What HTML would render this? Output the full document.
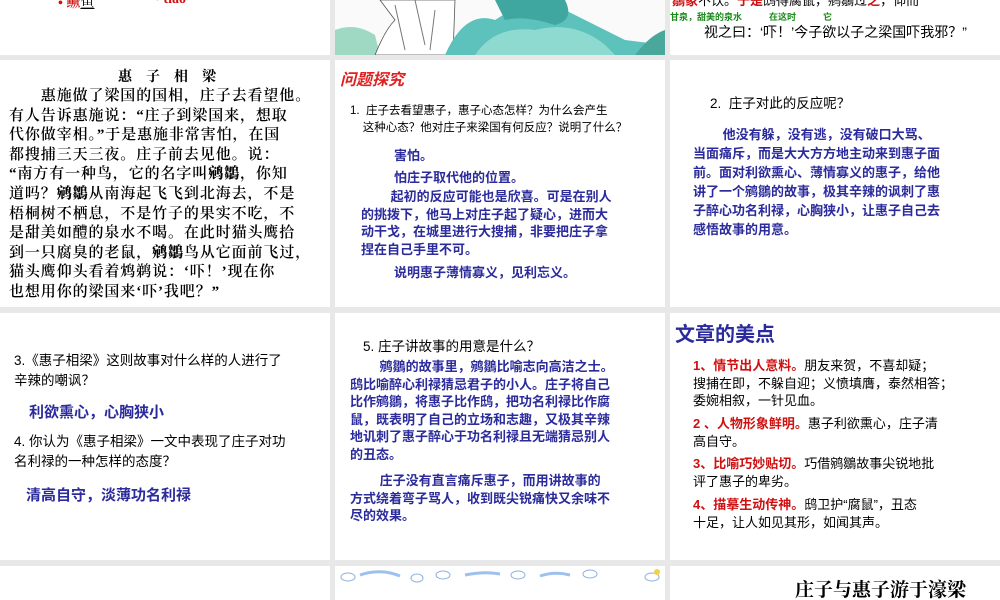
<!DOCTYPE html>
<html><head><meta charset="utf-8">
<style>
*{margin:0;padding:0;box-sizing:border-box}
body{width:1000px;height:600px;background:#e8e8e8;position:relative;overflow:hidden;font-family:"Liberation Sans","Noto Sans CJK SC",sans-serif;}
.s{position:absolute;background:#fff;overflow:hidden}
.t{position:absolute;white-space:nowrap}
.serif{font-family:"Liberation Serif","Noto Serif CJK SC",serif}
.blue{color:#2b2b9c;font-weight:bold}
.red{color:#d01010;font-weight:bold}
</style></head><body>
<!-- row1 -->
<div class="s" style="left:0;top:0;width:330px;height:55px">
 <div class="t red serif" style="left:58px;top:-8px;font-size:14px">•&nbsp;鳜<span style="color:#000;font-weight:normal;text-decoration:underline">鱼</span></div>
 <div class="t red serif" style="left:155px;top:-8px;font-size:14px">•&nbsp;tiao</div>
</div>
<div class="s" style="left:335px;top:0;width:330px;height:55px;background:#fafafa">
 <svg width="330" height="55" style="position:absolute;left:0;top:0">
  <path d="M0 55 L0 30 Q20 22 40 35 L45 55Z" fill="#9fd9c4"/>
  <path d="M45 0 L120 0 L118 55 L40 55 Q50 30 60 20Z" fill="#fff" stroke="#555" stroke-width="0.8"/>
  <path d="M60 5 L70 50 M80 0 L90 45 M100 10 L95 50" stroke="#777" fill="none"/>
  <path d="M110 55 Q130 10 160 20 Q190 0 220 5 Q260 25 290 40 L330 45 L330 55Z" fill="#5cc2bb"/>
  <path d="M140 55 Q160 25 200 30 Q240 20 270 45 L280 55Z" fill="#8fdad0"/>
  <path d="M160 0 L230 0 Q240 20 220 25 Q190 15 170 20Z" fill="#3fa7a0"/>
  <path d="M300 55 Q315 35 330 30 L330 55Z" fill="#4aa79b"/>
 </svg>
</div>
<div class="s" style="left:670px;top:0;width:330px;height:55px">
 <div class="t" style="left:2px;top:-10px;font-size:13px;color:#000"><span class="red">鶵象</span>不饮。<span class="red">于是</span>鸱得腐鼠，鹓鶵过<span class="red">之</span>，仰而</div>
 <div class="t" style="left:0;top:10px;font-size:9px;color:#1a8a1a;font-weight:bold">甘泉，甜美的泉水　　　在这时　　　它</div>
 <div class="t" style="left:34px;top:22px;font-size:14px;color:#000">视之曰：‘吓！’今子欲以子之梁国吓我邪？”</div>
</div>
<!-- row2 -->
<div class="s serif" style="left:0;top:60px;width:330px;height:247px;font-size:15px;line-height:19.6px;color:#000">
 <div class="t" style="left:118px;top:8px;font-size:14px;font-weight:bold">惠　子　相　梁</div>
 <div class="t" style="left:9px;top:27px;letter-spacing:0.9px;font-weight:600">
 　　惠施做了梁国的国相，庄子去看望他。<br>
 有人告诉惠施说：“庄子到梁国来，想取<br>
 代你做宰相。”于是惠施非常害怕，在国<br>
 都搜捕三天三夜。庄子前去见他。说：<br>
 “南方有一种鸟，它的名字叫<b>鹓鶵</b>，你知<br>
 道吗？<b>鹓鶵</b>从南海起飞飞到北海去，不是<br>
 梧桐树不栖息，不是竹子的果实不吃，不<br>
 是甜美如醴的泉水不喝。在此时猫头鹰拾<br>
 到一只腐臭的老鼠，<b>鹓鶵</b>鸟从它面前飞过，<br>
 猫头鹰仰头看着鸩鹈说：‘吓！’现在你<br>
 也想用你的梁国来‘吓’我吧？”</div>
</div>
<div class="s" style="left:335px;top:60px;width:330px;height:247px">
 <div class="t" style="left:5px;top:6px;font-size:16px;color:#e02020;font-weight:bold;font-style:italic">问题探究</div>
 <div class="t" style="left:15px;top:43px;font-size:11.5px;line-height:17px;color:#000">1.&nbsp; 庄子去看望惠子，惠子心态怎样？为什么会产生<br>&nbsp;&nbsp;&nbsp;&nbsp;这种心态？他对庄子来梁国有何反应？说明了什么？</div>
 <div class="t blue" style="left:59px;top:85px;font-size:13px">害怕。</div>
 <div class="t blue" style="left:59px;top:107px;font-size:13px">怕庄子取代他的位置。</div>
 <div class="t blue" style="left:26px;top:128px;font-size:13px;line-height:17.5px">　　 起初的反应可能也是欣喜。可是在别人<br>的挑拨下，他马上对庄子起了疑心，进而大<br>动干戈，在城里进行大搜捕，非要把庄子拿<br>捏在自己手里不可。</div>
 <div class="t blue" style="left:59px;top:202px;font-size:13px">说明惠子薄情寡义，见利忘义。</div>
</div>
<div class="s" style="left:670px;top:60px;width:330px;height:247px">
 <div class="t" style="left:40px;top:32px;font-size:13.5px;color:#000">2.&nbsp; 庄子对此的反应呢？</div>
 <div class="t blue" style="left:23px;top:65px;font-size:13px;line-height:19px">　　 他没有躲，没有逃，没有破口大骂、<br>当面痛斥，而是大大方方地主动来到惠子面<br>前。面对利欲熏心、薄情寡义的惠子，给他<br>讲了一个鹓鶵的故事，极其辛辣的讽刺了惠<br>子醉心功名利禄，心胸狭小，让惠子自己去<br>感悟故事的用意。</div>
</div>
<!-- row3 -->
<div class="s" style="left:0;top:313px;width:330px;height:247px">
 <div class="t" style="left:14px;top:38px;font-size:13.5px;line-height:20px;color:#000">3.《惠子相梁》这则故事对什么样的人进行了<br>辛辣的嘲讽？</div>
 <div class="t blue" style="left:29px;top:88px;font-size:15px">利欲熏心，心胸狭小</div>
 <div class="t" style="left:14px;top:119px;font-size:13.5px;line-height:20px;color:#000">4.&nbsp;你认为《惠子相梁》一文中表现了庄子对功<br>名利禄的一种怎样的态度？</div>
 <div class="t blue" style="left:26px;top:171px;font-size:15px">清高自守，淡薄功名利禄</div>
</div>
<div class="s" style="left:335px;top:313px;width:330px;height:247px">
 <div class="t" style="left:28px;top:22px;font-size:13.5px;color:#000">5.&nbsp;庄子讲故事的用意是什么？</div>
 <div class="t blue" style="left:15px;top:45px;font-size:13px;line-height:17.5px">　　 鹓鶵的故事里，鹓鶵比喻志向高洁之士。<br>鸱比喻醉心利禄猜忌君子的小人。庄子将自己<br>比作鹓鶵，将惠子比作鸱，把功名利禄比作腐<br>鼠，既表明了自己的立场和志趣，又极其辛辣<br>地讥刺了惠子醉心于功名利禄且无端猜忌别人<br>的丑态。</div>
 <div class="t blue" style="left:15px;top:159px;font-size:13px;line-height:17.5px">　　 庄子没有直言痛斥惠子，而用讲故事的<br>方式绕着弯子骂人，收到既尖锐痛快又余味不<br>尽的效果。</div>
</div>
<div class="s" style="left:670px;top:313px;width:330px;height:247px">
 <div class="t blue" style="left:5px;top:5px;font-size:20px">文章的美点</div>
 <div class="t" style="left:23px;top:44px;font-size:13px;line-height:17.5px;color:#000"><span class="red">1、情节出人意料。</span>朋友来贺，不喜却疑；<br>搜捕在即，不躲自迎；义愤填膺，泰然相答；<br>委婉相叙，一针见血。</div>
 <div class="t" style="left:23px;top:102px;font-size:13px;line-height:17.5px;color:#000"><span class="red">2 、人物形象鲜明。</span>惠子利欲熏心，庄子清<br>高自守。</div>
 <div class="t" style="left:23px;top:142px;font-size:13px;line-height:17.5px;color:#000"><span class="red">3、比喻巧妙贴切。</span>巧借鹓鶵故事尖锐地批<br>评了惠子的卑劣。</div>
 <div class="t" style="left:23px;top:183px;font-size:13px;line-height:17.5px;color:#000"><span class="red">4、描摹生动传神。</span>鸱卫护“腐鼠”，丑态<br>十足，让人如见其形，如闻其声。</div>
</div>
<!-- row4 -->
<div class="s" style="left:0;top:566px;width:330px;height:34px"></div>
<div class="s" style="left:335px;top:566px;width:330px;height:34px">
 <svg width="330" height="34" style="position:absolute;left:0;top:0">
  <g fill="none" stroke="#8ab0e0" stroke-width="1">
   <ellipse cx="13" cy="11" rx="7" ry="4"/><ellipse cx="82" cy="12" rx="6" ry="4"/><ellipse cx="108" cy="9" rx="7" ry="4"/>
   <ellipse cx="183" cy="9" rx="7" ry="4"/><ellipse cx="255" cy="8" rx="7" ry="4"/><ellipse cx="317" cy="11" rx="7" ry="4"/>
  </g>
  <path d="M25 9 Q45 2 65 10" stroke="#9ec0ee" stroke-width="3" fill="none"/>
  <path d="M130 9 Q150 5 165 8" stroke="#9ec0ee" stroke-width="3" fill="none"/>
  <path d="M205 10 Q220 5 235 9" stroke="#9ec0ee" stroke-width="3" fill="none"/>
  <circle cx="322" cy="6" r="3" fill="#f3d04a"/>
 </svg>
</div>
<div class="s" style="left:670px;top:566px;width:330px;height:34px">
 <div class="t serif" style="left:125px;top:9px;font-size:19px;color:#000;font-weight:bold">庄子与惠子游于濠梁</div>
</div>
</body></html>
